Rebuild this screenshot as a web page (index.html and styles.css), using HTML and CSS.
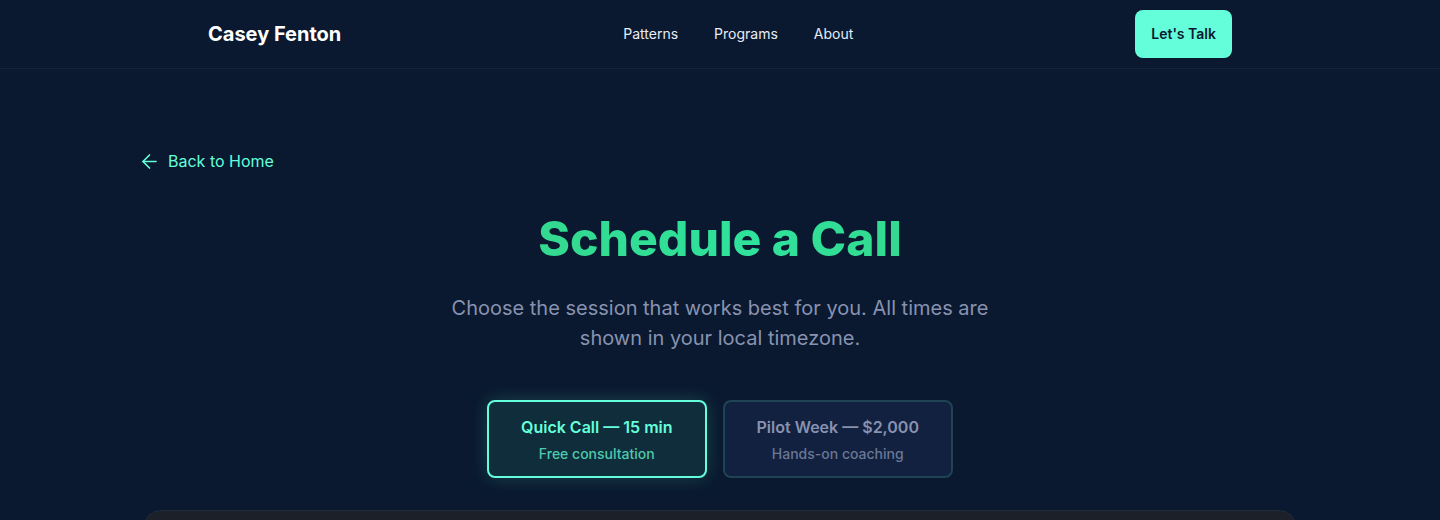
FILE: index.html
```html
<!DOCTYPE html>
<html lang="en">
<head>
<meta charset="utf-8">
<title>Schedule a Call — Casey Fenton</title>
<link rel="stylesheet" href="styles.css">
</head>
<body>
<header class="site-header">
  <nav class="nav">
    <a class="brand" href="#">Casey Fenton</a>
    <ul class="nav-links">
      <li><a href="#">Patterns</a></li>
      <li><a href="#">Programs</a></li>
      <li><a href="#">About</a></li>
    </ul>
    <a class="cta" href="#">Let's Talk</a>
  </nav>
</header>
<main class="main">
  <a class="back" href="#">
    <svg class="back-icon" viewBox="5 5 14 14" width="13" height="13" fill="none" stroke="currentColor" stroke-width="1.8" stroke-linecap="round" stroke-linejoin="round"><path d="M19 12H5"/><path d="M12 19l-7-7 7-7"/></svg>
    <span>Back to Home</span>
  </a>
  <section class="intro">
    <h1 class="title">Schedule a Call</h1>
    <p class="lead">Choose the session that works best for you. All times are shown in your local timezone.</p>
    <div class="tabs">
      <button class="tab tab-active" type="button">
        <span class="tab-title">Quick Call — 15 min</span>
        <span class="tab-sub">Free consultation</span>
      </button>
      <button class="tab" type="button">
        <span class="tab-title">Pilot Week — $2,000</span>
        <span class="tab-sub">Hands-on coaching</span>
      </button>
    </div>
  </section>
  <div class="calendar-card"></div>
</main>
</body>
</html>
```

FILE: styles.css
```css
* { box-sizing: border-box; }
html, body { margin: 0; padding: 0; }
body {
  background: #0a192f;
  color: #ccd6f6;
  font-family: Inter, "Noto Sans", "Liberation Sans", sans-serif;
  overflow: hidden;
}
a { text-decoration: none; color: inherit; }

.site-header {
  border-bottom: 1px solid #15243a;
  height: 69px;
}
.nav {
  max-width: 1024px;
  margin: 0 auto;
  height: 68px;
  display: flex;
  align-items: center;
  justify-content: space-between;
}
.brand {
  font-size: 20px;
  font-weight: 700;
  color: #ffffff;
}
.nav-links {
  list-style: none;
  margin: 0;
  padding: 0 0 2px;
  display: flex;
  gap: 36px;
  font-size: 14px;
  color: #e6ecf8;
}
.cta {
  background: #64ffda;
  color: #0a192f;
  font-size: 14px;
  font-weight: 600;
  height: 48px;
  padding: 0 16px 2px;
  border-radius: 8px;
  display: flex;
  align-items: center;
}

.main {
  max-width: 1152px;
  margin: 0 auto;
  padding-top: 82px;
}
.back {
  display: inline-flex;
  align-items: center;
  gap: 12px;
  color: #64ffda;
  font-size: 16px;
  margin-left: -1px;
}
.back-icon { overflow: visible; }
.intro {
  display: flex;
  flex-direction: column;
  align-items: center;
  text-align: center;
  padding-top: 38px;
}
.title {
  margin: 0;
  font-size: 48px;
  font-weight: 800;
  line-height: 58px;
  background: linear-gradient(90deg, #34d98f, #2fe39c 60%, #34d98f);
  -webkit-background-clip: text;
  background-clip: text;
  color: transparent;
}
.lead {
  margin: 25px 0 0;
  max-width: 576px;
  font-size: 20px;
  line-height: 30px;
  color: #8892b0;
}
.tabs {
  display: flex;
  gap: 16px;
  margin-top: 47px;
}
.tab {
  font-family: inherit;
  display: flex;
  flex-direction: column;
  align-items: center;
  gap: 8px;
  padding: 15px 32px 14px;
  border-radius: 8px;
  background: #11213f;
  border: 2px solid #1f4455;
  cursor: pointer;
}
.tab-title {
  font-size: 16px;
  font-weight: 600;
  color: #8892b0;
}
.tab-sub {
  font-size: 14px;
  font-weight: 500;
  color: #6b7794;
}
.tab-active {
  background: #0f2d3b;
  border-color: #64ffda;
  box-shadow: 0 0 18px rgba(100, 255, 218, 0.18);
}
.tab-active .tab-title { color: #64ffda; }
.tab-active .tab-sub { color: #4fc9ad; }

.calendar-card {
  margin-top: 32px;
  height: 200px;
  background: #1b2029;
  border: 1px solid #1f2b3d;
  border-radius: 16px;
}
```
